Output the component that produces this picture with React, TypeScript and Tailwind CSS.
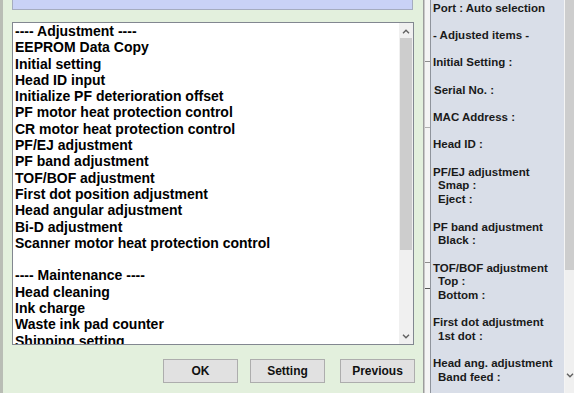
import React from 'react'

const adjustItems = [
   '---- Adjustment ----',
   'EEPROM Data Copy',
   'Initial setting',
   'Head ID input',
   'Initialize PF deterioration offset',
   'PF motor heat protection control',
   'CR motor heat protection control',
   'PF/EJ adjustment',
   'PF band adjustment',
   'TOF/BOF adjustment',
   'First dot position adjustment',
   'Head angular adjustment',
   'Bi-D adjustment',
   'Scanner motor heat protection control',
   '',
   '---- Maintenance ----',
   'Head cleaning',
   'Ink charge',
   'Waste ink pad counter',
   'Shipping setting',
]

// [text, indent]
const infoLines: [string, number][] = [
   ['Port : Auto selection', 0],
   ['', 0],
   ['- Adjusted items -', 0],
   ['', 0],
   ['Initial Setting :', 0],
   ['', 0],
   ['Serial No. :', 1],
   ['', 0],
   ['MAC Address :', 0],
   ['', 0],
   ['Head ID :', 0],
   ['', 0],
   ['PF/EJ adjustment', 0],
   ['Smap :', 5],
   ['Eject :', 5],
   ['', 0],
   ['PF band adjustment', 0],
   ['Black :', 5],
   ['', 0],
   ['TOF/BOF adjustment', 0],
   ['Top :', 5],
   ['Bottom :', 5],
   ['', 0],
   ['First dot adjustment', 0],
   ['1st dot :', 5],
   ['', 0],
   ['Head ang. adjustment', 0],
   ['Band feed :', 5],
]

function Chevron({ up }: { up?: boolean }) {
   return (
      <svg width="8" height="5" viewBox="0 0 8 5" className="block">
         <path d={up ? 'M1 4.2 L4 1.2 L7 4.2' : 'M1 0.8 L4 3.8 L7 0.8'} fill="none" stroke="#606060" strokeWidth="1.4" />
      </svg>
   )
}

function Button({ label }: { label: string }) {
   return (
      <button className="h-[24px] w-[75px] border border-[#adadad] bg-[#e1e1e1] text-[12px] font-bold text-[#111]">
         {label}
      </button>
   )
}

export default function App() {
   return (
      <div className="flex h-[393px] w-[574px] overflow-hidden bg-white font-['Liberation_Sans',Arial,sans-serif] font-bold text-black">
         {/* dialog */}
         <div className="flex h-full w-[424px] border-r border-[#9c9c9c] bg-[#e3f0dd]">
            <div className="h-full w-[3px] bg-[#b9bdb5]" />
            <div className="flex flex-col pl-[9px]">
               <div className="h-[10px] w-[401px] border-x border-b border-[#a5acbf] bg-[#c9d2f6]" />

               <div className="mt-[12px] flex h-[323px] w-[402px] border border-[#828790] bg-white">
                  <div className="flex-1 overflow-hidden pl-[2px] text-[14px] leading-[16.3px]">
                     {adjustItems.map((item, i) => (
                        <div key={i} className="h-[16.3px] whitespace-nowrap">{item}</div>
                     ))}
                  </div>
                  <div className="flex w-[14px] flex-col bg-[#f0f0f0]">
                     <div className="flex h-[15px] items-center justify-center pt-[2px]">
                        <Chevron up />
                     </div>
                     <div className="mx-[1px] h-[212px] bg-[#cdcdcd]" />
                     <div className="flex-1" />
                     <div className="flex h-[16px] items-center justify-center">
                        <Chevron />
                     </div>
                  </div>
               </div>

               <div className="mt-[13px] flex">
                  <div className="ml-[151px]"><Button label="OK" /></div>
                  <div className="ml-[12px]"><Button label="Setting" /></div>
                  <div className="ml-[15px]"><Button label="Previous" /></div>
               </div>
            </div>
         </div>

         {/* window edge behind */}
         <div className="flex h-full w-[6px] flex-col border-l border-[#c8c8c8] bg-[#f4f4f4]">
            <div className="h-[62px] border-b border-[#8d8d8d]" />
            <div className="h-[66px] border-b border-[#b0b0b0]" />
            <div className="h-[135px] border-b border-[#8d8d8d]" />
            <div className="h-[26px] border-b border-[#555]" />
            <div className="flex-1" />
         </div>

         {/* info panel */}
         <div className="h-full w-[134px] border-l border-[#8f949c] bg-[#d9dee8] pl-[2px] pt-[1.5px] text-[11.5px] leading-[13.7px] text-[#1a1a1a]">
            {infoLines.map(([text, indent], i) => (
               <div key={i} className="h-[13.7px] whitespace-nowrap" style={{ paddingLeft: indent }}>
                  {text}
               </div>
            ))}
         </div>

         {/* scrollbar */}
         <div className="flex h-full w-[10px] flex-col border-l border-[#f4f4f4] bg-[#f0f0f0]">
            <div className="h-[270px] bg-[#cdcdcd]" />
            <div className="flex-1" />
            <div className="flex h-[20px] items-start justify-start pl-[1px]">
               <Chevron />
            </div>
         </div>
      </div>
   )
}
